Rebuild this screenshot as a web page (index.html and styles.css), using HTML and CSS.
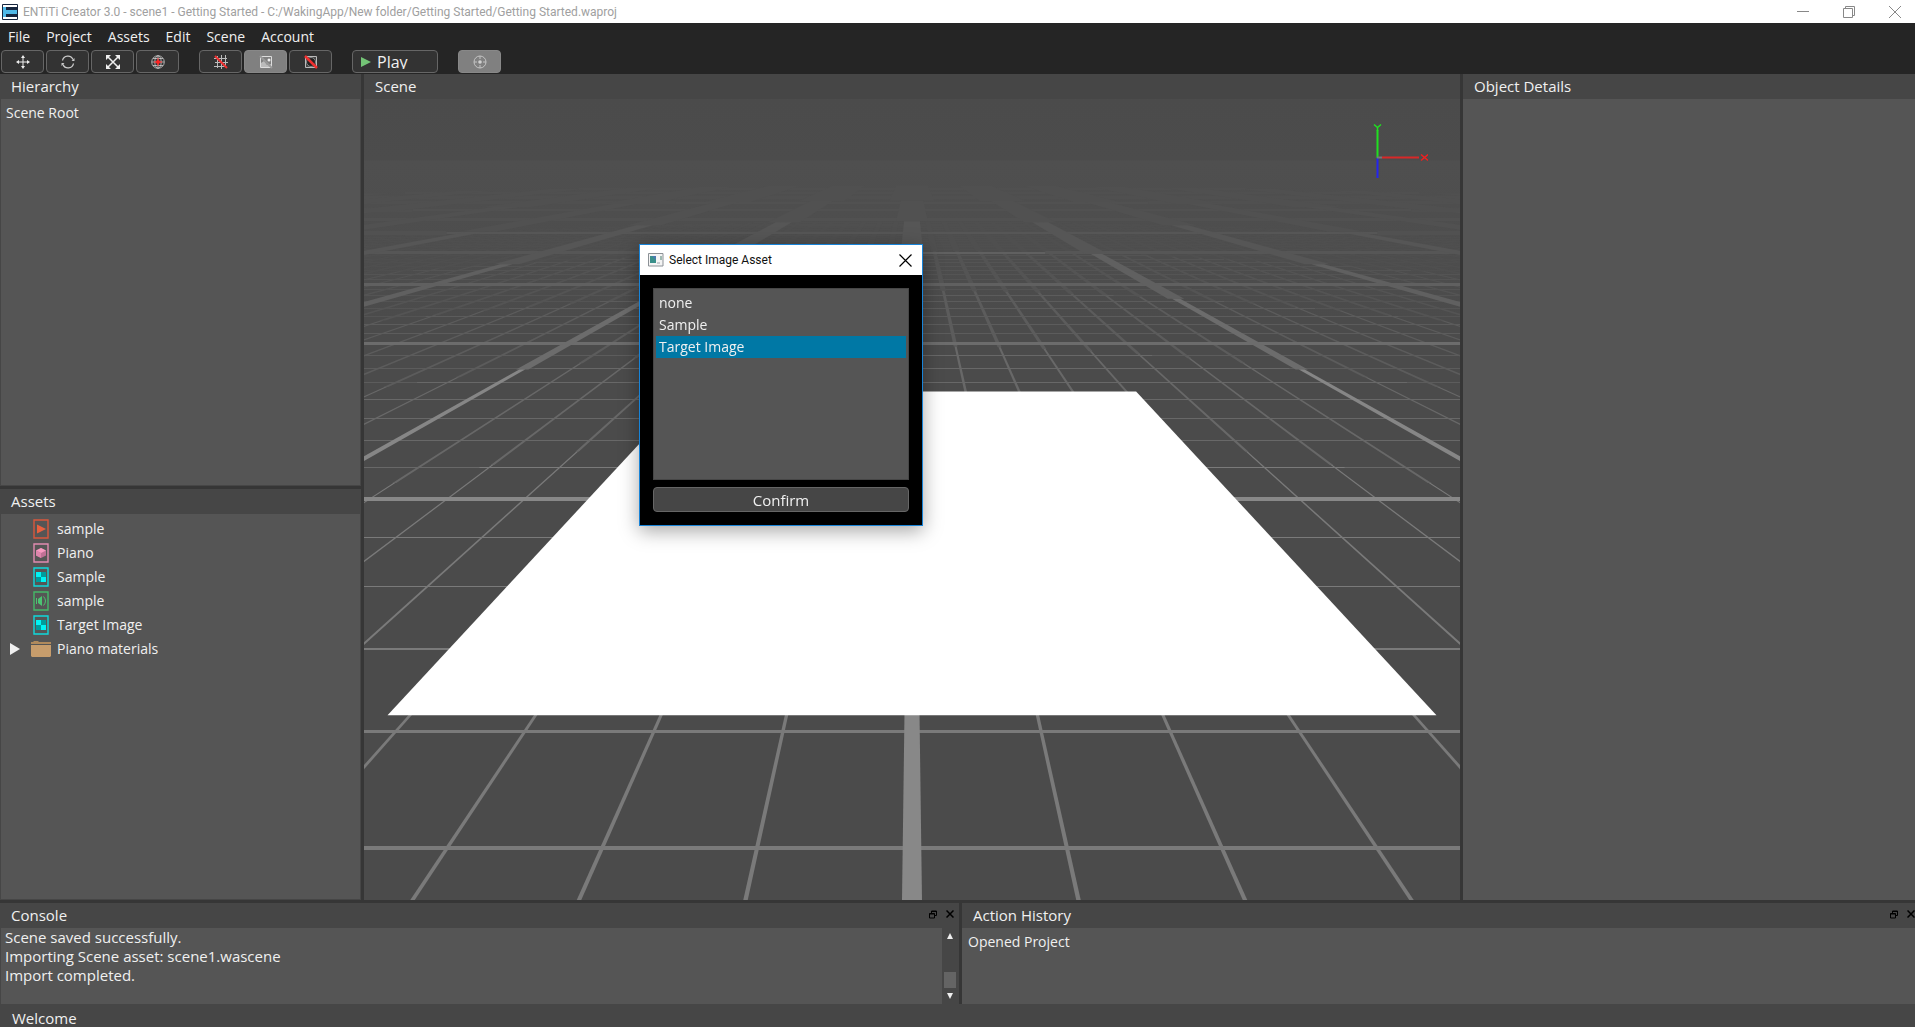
FILE: index.html
```html
<!DOCTYPE html>
<html lang="en">
<head>
<meta charset="utf-8">
<title>ENTiTi Creator 3.0</title>
<link rel="stylesheet" href="styles.css">
</head>
<body>
<svg class="defs" aria-hidden="true">
  <symbol id="texture" viewBox="0 0 16 20"><path d="M1 1h14v18H1z" fill="none" stroke="#0fd9dc" stroke-width="1.4"/><path d="M3 5h5v5H3zM8 10h5v5H8z" fill="#00f4f4"/><path d="M8 5h5v5H8zM3 10h5v5H3z" fill="#009c9c"/></symbol>
  <symbol id="float" viewBox="0 0 8 9"><path d="M2.500 3V1h5v4.500H6M.5 3.500h5v4.500h-5zM.5 4h5M2.500 1.500h5" fill="none" stroke="#000"/></symbol>
  <symbol id="cross" viewBox="0 0 8 8"><path d="M.5.5l7 7M7.500.5l-7 7" stroke="#000" stroke-width="1.500"/></symbol>
</svg>
<div class="app">
  <header class="titlebar">
    <svg class="logo" viewBox="0 0 16 16"><rect width="16" height="16" rx="1" fill="#16263f"/><path d="M1 1h14v2H1zM1 13h14v2H1z" fill="#fff"/><path d="M1 3h3v10H1zM4 6h11v4H4z" fill="#4fb9e8"/><path d="M4 3h11v3H4zM4 10h12v3H4z" fill="#16263f"/></svg>
    <h1 class="app-title">ENTiTi Creator 3.0 - scene1 - Getting Started - C:/WakingApp/New folder/Getting Started/Getting Started.waproj</h1>
    <div class="window-buttons">
      <button class="plain" aria-label="Minimize"><svg width="12" height="12"><path d="M0 5.500h12" stroke="#888"/></svg></button>
      <button class="plain" aria-label="Restore"><svg width="12" height="12"><path d="M.5 2.500h9v9h-9zM2.500 2V.5h9v9H10" fill="none" stroke="#888"/></svg></button>
      <button class="plain" aria-label="Close"><svg width="12" height="12"><path d="M0 0l12 12M12 0L0 12" stroke="#888"/></svg></button>
    </div>
  </header>

  <nav class="menubar">
    <button class="plain">File</button>
    <button class="plain">Project</button>
    <button class="plain">Assets</button>
    <button class="plain">Edit</button>
    <button class="plain">Scene</button>
    <button class="plain">Account</button>
  </nav>

  <div class="toolbar" role="toolbar">
    <div class="tool-group">
      <button class="tool" aria-label="Move"><svg width="14" height="14" viewBox="0 0 14 14"><path d="M7 2v10M2 7h10" stroke="#eee"/><path d="M7 0l2 3H5zM7 14l2-3H5zM0 7l3-2v4zM14 7l-3-2v4z" fill="#eee"/></svg></button>
      <button class="tool" aria-label="Rotate"><svg width="14" height="14" viewBox="0 0 14 14"><path d="M1.500 5.500A5.500 5.500 0 0 1 12 4.500M12.500 8.500A5.500 5.500 0 0 1 2 9.500" fill="none" stroke="#ccc" stroke-width="1.300"/><path d="M13.500 3v3H10.500zM.5 11V8h3z" fill="#ccc"/></svg></button>
      <button class="tool" aria-label="Scale"><svg width="14" height="14" viewBox="0 0 14 14"><path d="M2 2l10 10M12 2L2 12" stroke="#eee" stroke-width="1.500"/><path d="M0 0h5L0 5zM14 0v5L9 0zM0 14V9l5 5zM14 14H9l5-5z" fill="#eee"/></svg></button>
      <button class="tool" aria-label="World space"><svg width="14" height="14" viewBox="0 0 14 14"><g fill="none" stroke="#ccc" stroke-width=".8"><circle cx="7" cy="7" r="6.300"/><ellipse cx="7" cy="7" rx="3.200" ry="6.300"/><path d="M7 1v12M1 7h12M2 3.500h10M2 10.500h10"/></g><circle cx="7" cy="7" r="2" fill="#f22"/><path d="M7 3v8M3 7h8" stroke="#f22"/></svg></button>
    </div>
    <div class="tool-group">
      <button class="tool" aria-label="Snap to grid"><svg width="14" height="14" viewBox="0 0 14 14"><path d="M3.500 1v12M7.500 0v14M11.500 0v12M0 3.500h13M1 7.500h13M0 11.500h12" stroke="#bbb"/><path d="M1 1l12 12" stroke="#f03030" stroke-width="2"/></svg></button>
      <button class="tool active" aria-label="Image preview" aria-pressed="true"><svg width="14" height="14" viewBox="0 0 14 14"><path d="M1.500 1.500h11v11h-11z" fill="none" stroke="#ddd"/><path d="M2 12V8l3-2 3 4 4-1v3z" fill="#bbb"/><circle cx="10" cy="5" r="1.500" fill="#eee"/><path d="M1 1l12 12" stroke="#999" stroke-width="2"/></svg></button>
      <button class="tool" aria-label="Hide target"><svg width="14" height="14" viewBox="0 0 14 14"><path d="M1.500 1.500h11v11h-11z" fill="#444" stroke="#bbb"/><circle cx="7" cy="7" r="4.500" fill="#222" stroke="#888"/><path d="M1 1l12 12" stroke="#f03030" stroke-width="2.500"/></svg></button>
    </div>
    <button class="tool play"><svg width="10" height="10"><path d="M0 0l10 5-10 5z" fill="#74c476"/></svg><span class="play-label">Play</span></button>
    <button class="tool active" aria-label="Focus" aria-pressed="true"><svg width="14" height="14" viewBox="0 0 14 14"><g fill="none" stroke="#c4c4c4"><circle cx="7" cy="7" r="6"/><path d="M7 1v3M7 10v3M1 7h3M10 7h3"/></g><circle cx="7" cy="7" r="1.800" fill="#d0d0d0"/></svg></button>
  </div>

  <main class="workspace">
    <div class="left">
      <section class="panel">
        <h2 class="panel-title">Hierarchy</h2>
        <ul class="panel-body hierarchy"><li>Scene Root</li></ul>
      </section>
      <section class="panel">
        <h2 class="panel-title">Assets</h2>
        <ul class="panel-body assets">
          <li><svg class="icon" viewBox="0 0 16 20"><path d="M1 1h14v18H1z" fill="none" stroke="#d9573c" stroke-width="1.400"/><path d="M4 5.500l9 4.500-9 4.500z" fill="#e8603f"/></svg>sample</li>
          <li><svg class="icon" viewBox="0 0 16 20"><path d="M1 1h14v18H1z" fill="none" stroke="#e08bb0" stroke-width="1.400"/><path d="M8 5l5 2.500v5L8 15l-5-2.500v-5z" fill="#c07095"/><path d="M8 5l5 2.500L8 10 3 7.500z" fill="#f799c0"/><path d="M3 7.500L8 10v5l-5-2.500z" fill="#dd85ab"/></svg>Piano</li>
          <li><svg class="icon"><use href="#texture"/></svg>Sample</li>
          <li><svg class="icon" viewBox="0 0 16 20"><path d="M1 1h14v18H1z" fill="none" stroke="#45b868" stroke-width="1.400"/><path d="M5 8l4-3v10l-4-3z" fill="#4cc472"/><path d="M3.500 7v6M10.500 5.500q4 4.500 0 9" fill="none" stroke="#4cc472"/></svg>sample</li>
          <li><svg class="icon"><use href="#texture"/></svg>Target Image</li>
          <li class="folder"><svg class="arrow" viewBox="0 0 10 12"><path d="M0 0l10 6-10 6z" fill="#f0f0f0"/></svg><svg class="folder-icon" viewBox="0 0 20 16"><path d="M0 1h2l1-1h4l1 1h12v2H0z" fill="#b08a5c"/><path d="M0 4h20v11l-1 1H1l-1-1z" fill="#c79d6c"/></svg>Piano materials</li>
        </ul>
      </section>
    </div>
    <section class="panel scene">
      <h2 class="panel-title">Scene</h2>
      <div class="viewport">
        <canvas class="view"></canvas>
        <svg class="gizmo" width="56" height="60" viewBox="0 0 56 60"><path d="M5.500 7v28" stroke="#20e020" stroke-width="2"/><path d="M2 1.500l3.500 3L9 1.500M5.500 4v4" fill="none" stroke="#20e020" stroke-width="1.500"/><path d="M5.500 35v20" stroke="#2424f0" stroke-width="2"/><path d="M10 34.500h37" stroke="#d82828" stroke-width="2"/><path d="M5 34.500h5" stroke="#777" stroke-width="2"/><path d="M49 31.500l7 6M56 31.500l-7 6" stroke="#f02020" stroke-width="1.500"/></svg>
      </div>
    </section>
    <section class="panel">
      <h2 class="panel-title">Object Details</h2>
      <div class="panel-body"></div>
    </section>
  </main>

  <div class="dock">
    <section class="panel">
      <div class="dock-head">
        <h2 class="panel-title">Console</h2>
        <button class="plain" aria-label="Float console"><svg width="8" height="9"><use href="#float"/></svg></button>
        <button class="plain" aria-label="Close console"><svg width="8" height="8"><use href="#cross"/></svg></button>
      </div>
      <div class="console">
        <div class="log" role="log">
          <p>Scene saved successfully.</p>
          <p>Importing Scene asset: scene1.wascene</p>
          <p>Import completed.</p>
        </div>
        <div class="scrollbar">
          <svg width="6" height="6"><path d="M3 0l3 6H0z" fill="#eee"/></svg>
          <div class="thumb"></div>
          <svg width="6" height="6"><path d="M0 0h6L3 6z" fill="#eee"/></svg>
        </div>
      </div>
    </section>
    <section class="panel">
      <div class="dock-head history-head">
        <h2 class="panel-title">Action History</h2>
        <button class="plain" aria-label="Float action history"><svg width="8" height="9"><use href="#float"/></svg></button>
        <button class="plain" aria-label="Close action history"><svg width="8" height="8"><use href="#cross"/></svg></button>
      </div>
      <ul class="panel-body history"><li>Opened Project</li></ul>
    </section>
  </div>

  <footer class="status">Welcome</footer>
</div>

<div class="dialog" role="dialog" aria-labelledby="dialog-title">
  <div class="dialog-head">
    <svg width="16" height="14" viewBox="0 0 16 14"><path d="M.5.500h14.500v12.500H.5z" fill="#f4f4f4" stroke="#8c9196"/><path d="M2 3h6v7H2z" fill="#3a8f8a"/><path d="M4 3h4v4z" fill="#4a78b0"/><path d="M13 3v4" stroke="#4a8070"/><path d="M9 9h3v2H9z" fill="#c8ccd0"/></svg>
    <h2 class="dialog-title" id="dialog-title">Select Image Asset</h2>
    <button class="plain" aria-label="Close dialog"><svg width="13" height="13"><path d="M.5.500l12 12M12.500.5l-12 12" stroke="#000" stroke-width="1.200"/></svg></button>
  </div>
  <div class="dialog-body">
    <ul class="choices" role="listbox" aria-labelledby="dialog-title">
      <li role="option">none</li>
      <li role="option">Sample</li>
      <li role="option" aria-selected="true">Target Image</li>
    </ul>
    <button class="confirm">Confirm</button>
  </div>
</div>
<script src="scene.js"></script>
</body>
</html>
```
FILE: styles.css
```css
* { box-sizing: border-box; }

body {
  margin: 0;
  background: #464646;
  color: #f0f0f0;
  font: 15px/20px "Open Sans", "Noto Sans", sans-serif;
}

h1, h2, p, ul { margin: 0; padding: 0; font-weight: normal; }
ul { list-style: none; }
svg { display: block; flex: none; }
.defs { position: absolute; width: 0; height: 0; }

button { margin: 0; color: inherit; font: inherit; }
.plain { padding: 0; border: 0; background: none; }

.app {
  display: flex;
  flex-direction: column;
  height: 100vh;
  overflow: hidden;
}

/* Window title bar */
.titlebar {
  display: flex;
  align-items: center;
  flex: none;
  gap: 5px;
  height: 23px;
  padding: 0 14px 0 2px;
  background: #fff;
}
.logo { width: 16px; height: 16px; }
.app-title { flex: 1; color: #a0a0a0; font: 12px/20px Roboto, "Open Sans", sans-serif; }
.window-buttons { display: flex; gap: 34px; }

/* Menus and tools */
.menubar {
  display: flex;
  align-items: flex-start;
  flex: none;
  gap: 16px;
  height: 27px;
  padding: 4px 8px 0;
  background: #252525;
  font-size: 14px;
}
.toolbar {
  display: flex;
  flex: none;
  gap: 20px;
  height: 24px;
  padding: 0 1px;
  background: #252525;
}
.tool-group { display: flex; gap: 2px; }
.tool {
  display: flex;
  align-items: center;
  justify-content: center;
  width: 43px;
  height: 23px;
  padding: 0;
  border: 1px solid #666;
  border-radius: 4px;
  background: #333;
}
.active { border-color: #888; background: #808080; }
.play { justify-content: flex-start; gap: 6px; width: 86px; padding-left: 8px; font-size: 16px; }
.play-label { height: 15px; overflow: hidden; line-height: 16px; }

/* Panels */
.workspace {
  display: grid;
  grid-template-columns: 361px minmax(0, 1fr) 452px;
  flex: 1;
  gap: 3px;
  min-height: 0;
  background: #363636;
}
.left { display: grid; grid-template-rows: 1fr 1fr; gap: 3px; min-height: 0; }
.panel { display: flex; flex-direction: column; min-width: 0; min-height: 0; background: #464646; }
.panel-title { flex: none; height: 25px; padding: 2px 11px 0; font-size: 15px; line-height: 20px; }
.panel-body { flex: 1; background: #555; }
.left .panel-body { margin: 0 1px 1px; }
.hierarchy { padding: 4px 5px; font-size: 14px; }
.assets { padding: 3px 9px; font-size: 14px; line-height: 24px; }
.assets li { display: flex; align-items: center; height: 24px; padding-left: 23px; gap: 8px; }
.assets .folder { gap: 6px; padding-left: 0; }
.icon { width: 16px; height: 20px; }
.arrow { width: 10px; height: 12px; margin-right: 5px; }
.folder-icon { width: 20px; height: 16px; }

/* Scene view */
.viewport { position: relative; flex: 1; min-height: 0; }
.view { display: block; width: 100%; height: 100%; }
.gizmo { position: absolute; top: 24px; right: 32px; }

/* Bottom dock */
.dock {
  display: grid;
  grid-template-columns: 959fr 953fr;
  flex: none;
  gap: 3px;
  height: 104px;
  padding-top: 3px;
  background: #363636;
}
.dock-head { display: flex; align-items: flex-start; gap: 9px; padding-right: 5px; }
.dock-head .panel-title { flex: 1; }
.dock-head .plain { padding-top: 7px; }
.history-head { padding-right: 0; }
.console { display: flex; flex: 1; padding-left: 1px; background: #464646; }
.log { flex: 1; padding: 0 4px; background: #555; font-size: 15px; line-height: 19px; }
.scrollbar { display: flex; flex-direction: column; align-items: center; width: 17px; padding: 5px 1px 5px 0; }
.thumb { width: 12px; height: 16px; margin: auto 0 5px; background: #646464; }
.history { padding: 4px 6px; font-size: 14px; }
.status { flex: none; height: 23px; padding: 4px 12px 0; overflow: hidden; background: #464646; }

/* Image picker */
.dialog {
  position: absolute;
  top: 244px;
  left: 639px;
  width: 284px;
  border: 1px solid #1883d7;
  background: #000;
  box-shadow: 0 5px 18px rgba(0, 0, 0, .35);
}
.dialog-head {
  display: flex;
  align-items: center;
  gap: 5px;
  height: 30px;
  padding: 0 10px 0 8px;
  background: #fff;
  color: #111;
}
.dialog-title { flex: 1; font: 12px/20px Roboto, "Open Sans", sans-serif; }
.dialog-body { display: flex; flex-direction: column; gap: 7px; padding: 13px; }
.choices { height: 192px; padding: 3px 2px; border: 1px solid #464646; background: #555; font-size: 14px; line-height: 22px; }
.choices li { padding: 0 3px; }
.choices [aria-selected] { background: #0078a5; }
.confirm { height: 25px; padding: 0; border: 1px solid #666; border-radius: 4px; background: #464646; font-size: 15px; line-height: 20px; }
```
FILE: scene.js
```js
const canvas = document.querySelector('.view');

// Camera: horizon height, pixels between lines per pixel below the horizon,
// and depth scale, for a view that is BASE_HEIGHT tall.
const BASE_HEIGHT = 801;
const HORIZON = 51;
const SPREAD = 0.222;
const DEPTH = 3490;

// Level of detail: farther levels are drawn wider and dimmer.
const LEVELS = [
  { to: 12.6, minor: [0.027, 122], major: [0.12, 136] },
  { to: 17.8, minor: [0.05, 104], major: [0.12, 134] },
  { to: 24.8, minor: [0.09, 92], major: [0.25, 108] },
  { to: 34.5, minor: [0.17, 84], major: [0.5, 96] },
  { to: 49, minor: [0.32, 79], major: [1, 86] },
  { to: 69, minor: null, major: [2, 81] },
  { to: 98, minor: null, major: [4, 80] }
];

function draw() {
  const w = canvas.width = canvas.clientWidth;
  const h = canvas.height = canvas.clientHeight;
  const g = canvas.getContext('2d');
  const s = h / BASE_HEIGHT;
  const px = (x, n) => w / 2 + x * SPREAD * DEPTH / n * s;
  const py = n => (HORIZON + DEPTH / n) * s;

  const sky = g.createLinearGradient(0, 0, 0, h);
  sky.addColorStop(0, '#4b4b4b');
  sky.addColorStop(61 / BASE_HEIGHT, '#4c4c4c');
  sky.addColorStop(62 / BASE_HEIGHT, '#4f4f4f');
  sky.addColorStop(160 / BASE_HEIGHT, '#4d4d4d');
  sky.addColorStop(220 / BASE_HEIGHT, '#4b4b4b');
  g.fillStyle = sky;
  g.fillRect(0, 0, w, h);

  function lines(kind, step) {
    for (let k = LEVELS.length - 1; k >= 0; k--) {
      if (!LEVELS[k][kind]) continue;
      const [width, grey] = LEVELS[k][kind];
      const near = k ? LEVELS[k - 1].to : 0;
      const far = LEVELS[k].to;
      g.fillStyle = `rgb(${grey},${grey},${grey})`;

      for (let n = step === 8 ? 2 : 3; n < far; n += step) {
        const outer = Math.sqrt(far * far - n * n);
        const inner = near > n ? Math.sqrt(near * near - n * n) : 0;
        const t = Math.max(1, Math.round(width * DEPTH / n / n * s));
        const y = Math.round(py(n) - t / 2);
        for (const side of [-1, 1]) {
          const a = px(side * inner, n), b = px(side * outer, n);
          g.fillRect(Math.min(a, b), y, Math.abs(b - a), t);
        }
      }

      const reach = Math.floor(far / step) * step;
      for (let i = -reach; i <= reach; i += step) {
        const n1 = Math.sqrt(far * far - i * i);
        const n0 = near > Math.abs(i) ? Math.sqrt(near * near - i * i) : 1;
        if (n1 <= 1) continue;
        const d = width / 2;
        g.beginPath();
        g.moveTo(px(i - d, n0), py(n0));
        g.lineTo(px(i + d, n0), py(n0));
        g.lineTo(px(i + d, n1), py(n1));
        g.lineTo(px(i - d, n1), py(n1));
        g.fill();
      }
    }
  }
  lines('minor', 1);
  lines('major', 8);

  // Image target plane
  g.fillStyle = '#fff';
  g.beginPath();
  g.moveTo(px(-4.18, 14.45), py(14.45));
  g.lineTo(px(4.18, 14.45), py(14.45));
  g.lineTo(px(4.18, 6.175), py(6.175));
  g.lineTo(px(-4.18, 6.175), py(6.175));
  g.fill();
}

draw();
window.addEventListener('resize', draw);
```
